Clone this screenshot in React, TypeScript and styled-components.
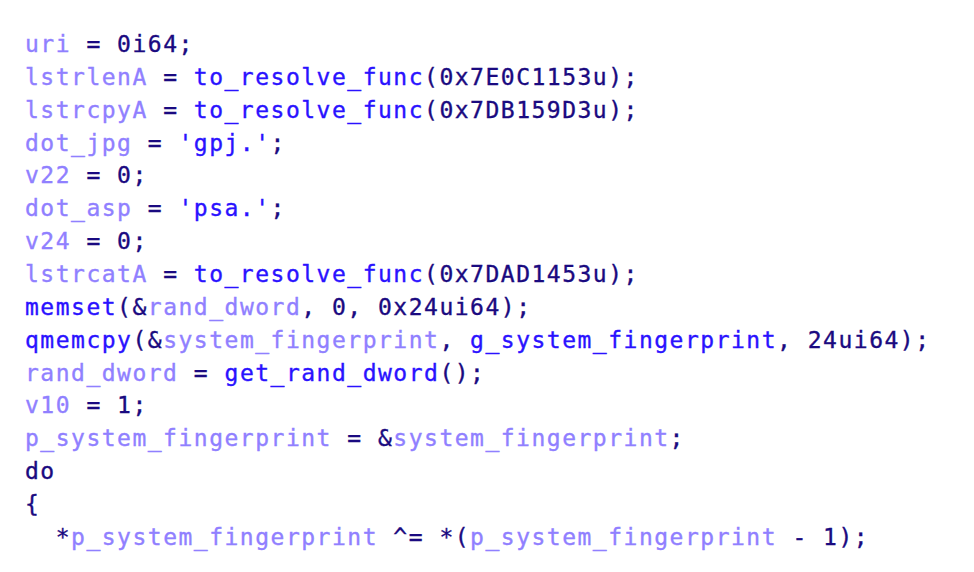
import React from "react";
import styled, { createGlobalStyle } from "styled-components";

const Global = createGlobalStyle`
  html, body { margin: 0; padding: 0; background: #ffffff; }
`;

type Kind = "v" | "f" | "n" | "s";

const colors: Record<Kind, string> = {
  v: "#9080ff",
  f: "#2a12ff",
  n: "#1a0a80",
  s: "#2a12ff",
};

const Listing = styled.pre`
  margin: 0;
  padding: 28px 0 0 25px;
  font-family: "DejaVu Sans Mono", "Liberation Mono", monospace;
  font-size: 23px;
  letter-spacing: 1.5px;
  line-height: 32.87px;
  white-space: pre;
  color: #1a0a80;
  -webkit-text-stroke: 0.35px currentColor;
`;

const Line = styled.div`
  height: 32.87px;
`;

const Tok = styled.span<{ $k: Kind }>`
  color: ${(p) => colors[p.$k]};
`;

const lines: [Kind, string][][] = [
  [["v", "uri"], ["n", " = 0i64;"]],
  [["v", "lstrlenA"], ["n", " = "], ["f", "to_resolve_func"], ["n", "(0x7E0C1153u);"]],
  [["v", "lstrcpyA"], ["n", " = "], ["f", "to_resolve_func"], ["n", "(0x7DB159D3u);"]],
  [["v", "dot_jpg"], ["n", " = "], ["s", "'gpj.'"], ["n", ";"]],
  [["v", "v22"], ["n", " = 0;"]],
  [["v", "dot_asp"], ["n", " = "], ["s", "'psa.'"], ["n", ";"]],
  [["v", "v24"], ["n", " = 0;"]],
  [["v", "lstrcatA"], ["n", " = "], ["f", "to_resolve_func"], ["n", "(0x7DAD1453u);"]],
  [["f", "memset"], ["n", "(&"], ["v", "rand_dword"], ["n", ", 0, 0x24ui64);"]],
  [["f", "qmemcpy"], ["n", "(&"], ["v", "system_fingerprint"], ["n", ", "], ["f", "g_system_fingerprint"], ["n", ", 24ui64);"]],
  [["v", "rand_dword"], ["n", " = "], ["f", "get_rand_dword"], ["n", "();"]],
  [["v", "v10"], ["n", " = 1;"]],
  [["v", "p_system_fingerprint"], ["n", " = &"], ["v", "system_fingerprint"], ["n", ";"]],
  [["n", "do"]],
  [["n", "{"]],
  [["n", "  *"], ["v", "p_system_fingerprint"], ["n", " ^= *("], ["v", "p_system_fingerprint"], ["n", " - 1);"]],
];

export default function App() {
  return (
    <>
      <Global />
      <Listing>
        {lines.map((line, i) => (
          <Line key={i}>
            {line.map(([k, t], j) => (
              <Tok key={j} $k={k}>
                {t}
              </Tok>
            ))}
          </Line>
        ))}
      </Listing>
    </>
  );
}
